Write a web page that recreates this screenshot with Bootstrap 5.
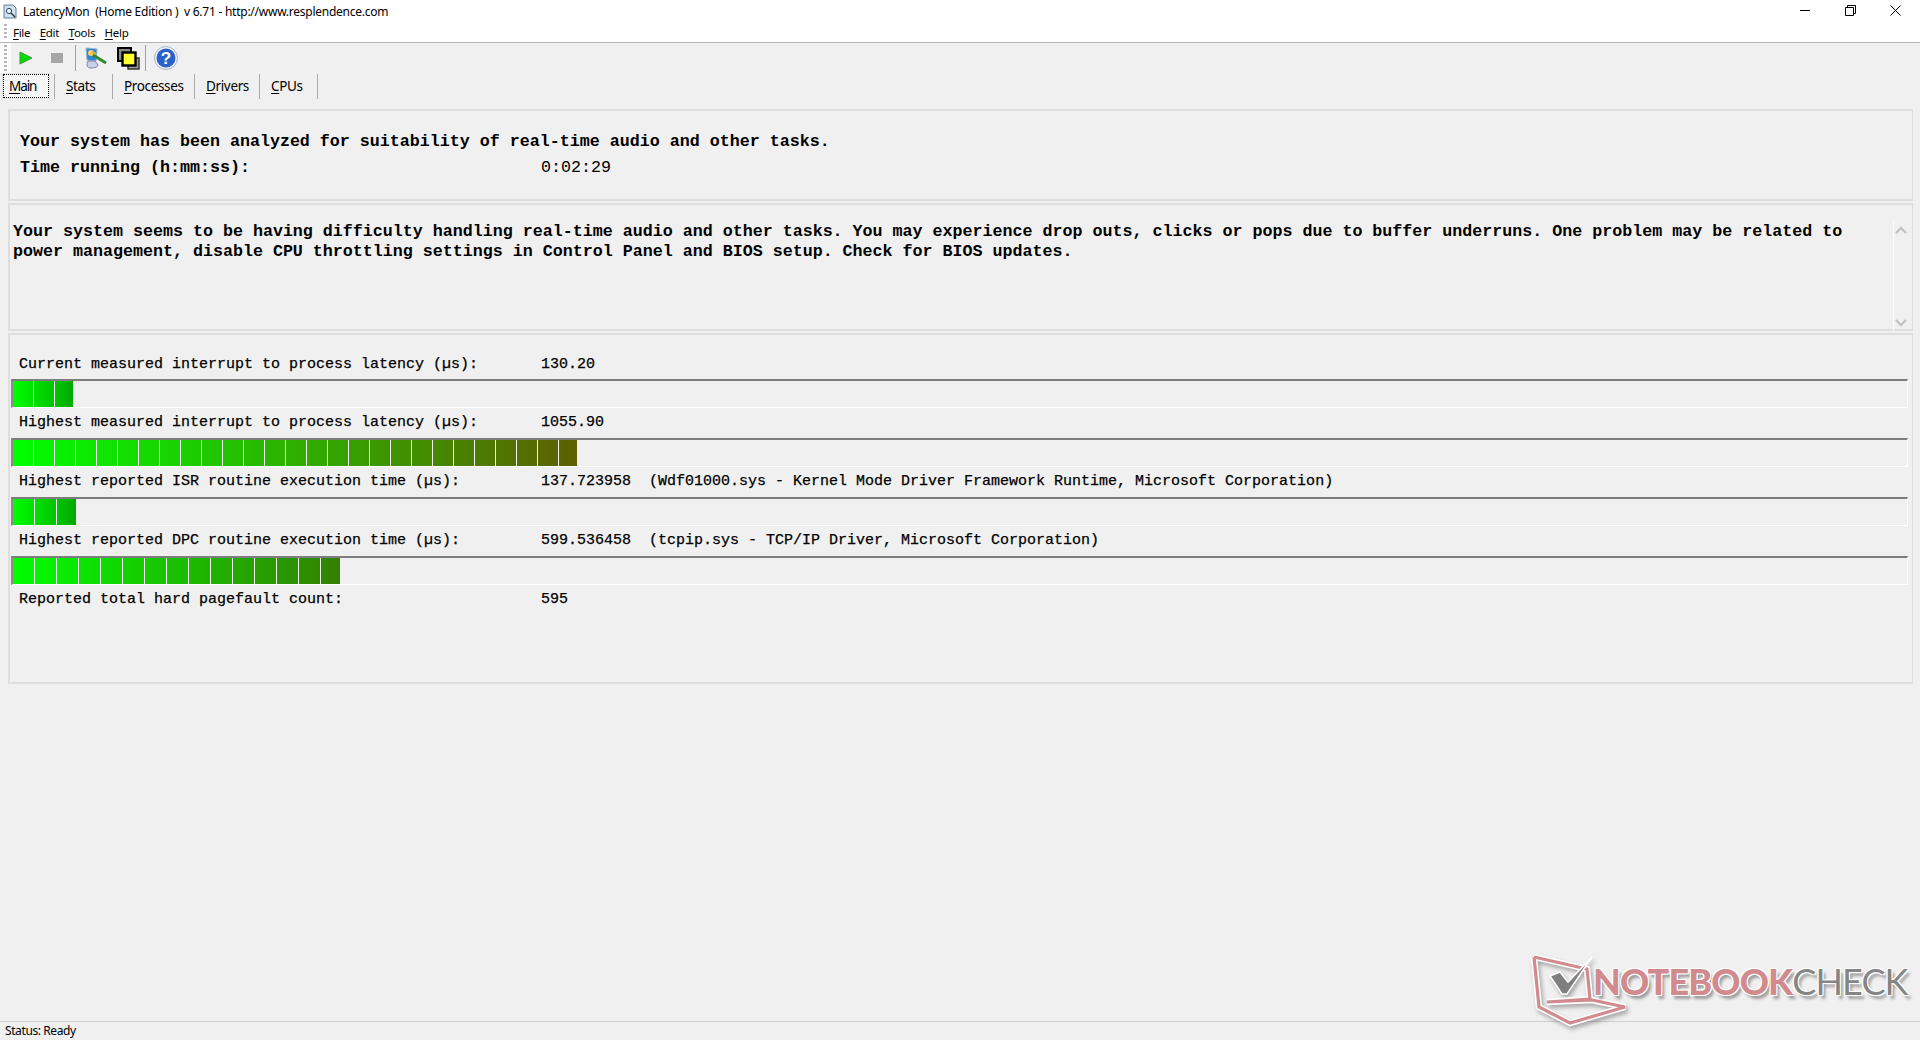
<!DOCTYPE html>
<html lang="en">
<head>
<meta charset="utf-8">
<title>LatencyMon</title>
<link href="https://cdn.jsdelivr.net/npm/bootstrap@5.3.0/dist/css/bootstrap.min.css" rel="stylesheet">
<style>
html,body{height:100%;overflow:hidden;}
body{background:#f0f0f0;color:#000;font-family:"Noto Sans","Open Sans",sans-serif;font-size:12px;}
.app-shell{height:1040px;position:relative;}
.chrome-top{background:#fff;border-bottom:1px solid #b4b4b4;height:43px;flex:none;}
.title-row{height:22px;padding-left:3px;}
.title-text{font-size:12px;margin-left:6px;white-space:pre;letter-spacing:-.25px;line-height:22px;padding-top:1px;}
.win-btns{margin-left:auto;margin-right:2px;height:20px;align-self:flex-start;}
.win-btn{width:45px;height:20px;display:flex;align-items:center;justify-content:center;}
.menu-row{height:20px;position:relative;padding-left:13px;gap:9.5px;}
.menu-item{font-size:11.5px;letter-spacing:-.3px;line-height:20px;padding-top:1px;}
.menu-item u,.tab-item u{text-underline-offset:2px;}
.grip{position:absolute;left:4px;width:3px;background:repeating-linear-gradient(180deg,#b8b8b8 0 2px,transparent 2px 4px);}
.grip-menu{top:2px;height:16px;}
.grip-tool{top:2px;height:26px;}
.tool-row{height:31px;flex:none;position:relative;}
.tool-white{width:11px;background:#fbfbfb;height:30px;flex:none;}
.tool-slot{position:absolute;top:0;height:30px;display:flex;align-items:center;justify-content:center;}
.tool-sep{position:absolute;top:2px;width:1px;height:26px;background:#a0a0a0;}
.tab-row{height:25px;flex:none;position:relative;}
.tab-item{position:absolute;top:0;height:25px;line-height:25px;font-size:13.5px;letter-spacing:-.35px;white-space:nowrap;}
.tab-active{left:3px;width:46px;top:0;height:24px;border:1px dotted #000;background:repeating-conic-gradient(#fff 0 25%,#f0f0f0 0 50%) 0 0/2px 2px;padding-left:5px;line-height:23px;box-shadow:0 0 0 1px #e4e4e4;letter-spacing:-1.1px;}
.tab-sep{position:absolute;top:0;width:1px;height:25px;background:#ababab;}
.panes{padding:10px 7px 0 8px;flex:none;}
.pane{border:2px solid #dedede;border-right-width:1px;border-bottom-width:2px;position:relative;}
.pane-a{height:92px;padding:18px 0 0 10px;font:bold 16.67px/26px "Liberation Mono",monospace;}
.pane-b{height:128px;margin-top:2px;padding:17px 0 0 3px;font:bold 16.67px/20px "Liberation Mono",monospace;}
.pane-c{height:351px;margin-top:2px;padding:14.5px 0 0 1px;font:15px/29.75px "Liberation Mono",monospace;-webkit-text-stroke:.25px #000;}
.mono-line{white-space:pre;}
.lbl-col{display:inline-block;width:521px;}
.lbl-col-b{display:inline-block;width:530px;padding-left:8px;}
.val-thin{font-weight:400;}
.scroll-strip{position:absolute;right:18px;top:16px;bottom:-2px;width:1px;background:#fbfbfb;}
.chev{position:absolute;right:4px;width:14px;}
.chev-up{top:21px;}
.chev-down{bottom:2px;}
.meter{height:29px;margin-right:4px;border-top:2px solid #7d7d7d;border-left:2px solid #8a8a8a;border-bottom:1px solid #fff;border-right:1px solid #fff;width:auto;}
.meter-fill{height:100%;}
.status-row{position:absolute;left:0;right:0;top:1021px;height:19px;border-top:1px solid #d2d2d2;font-size:12px;letter-spacing:-.4px;padding-left:5px;line-height:18px;}
.wm-box{position:absolute;left:1500px;top:940px;width:420px;height:90px;pointer-events:none;}
.wm-art{filter:drop-shadow(2px 3px 2px rgba(0,0,0,.3));}
.wm-text{position:absolute;left:93px;top:19px;font-family:Lato,sans-serif;font-size:36px;line-height:44px;white-space:nowrap;letter-spacing:-.85px;text-shadow:1px 1px 0 #fff,-1px -1px 0 #fff,1px -1px 0 #fff,-1px 1px 0 #fff,3px 4px 3px rgba(0,0,0,.35);}
.wm-red{color:#d18b8e;font-weight:900;}
.wm-gray{color:#858585;font-weight:400;}
</style>
</head>
<body>
<div class="app-shell d-flex flex-column">
  <div class="chrome-top">
    <div class="title-row d-flex align-items-center">
      <svg width="14" height="15" viewBox="0 0 14 15"><path d="M1 1h9l3 3v10H1z" fill="#cfe0ee" stroke="#5f7f9c"/><circle cx="6" cy="7" r="2.6" fill="#fff" stroke="#1c3f78"/><path d="M8 9l4 4" stroke="#333" stroke-width="1.5"/></svg>
      <span class="title-text">LatencyMon  (Home Edition )  v 6.71 - http://www.resplendence.com</span>
      <div class="win-btns d-flex">
        <div class="win-btn"><svg width="11" height="11" viewBox="0 0 11 11"><path d="M0 5.5h10" stroke="#000"/></svg></div>
        <div class="win-btn"><svg width="11" height="11" viewBox="0 0 11 11"><path d="M.5 2.5h8v8h-8zM2.5 2.5v-2h8v8h-2" fill="none" stroke="#000"/></svg></div>
        <div class="win-btn"><svg width="11" height="11" viewBox="0 0 11 11"><path d="M.5.5l10 10M10.5.5l-10 10" stroke="#000"/></svg></div>
      </div>
    </div>
    <div class="menu-row d-flex">
      <div class="grip grip-menu"></div>
      <span class="menu-item"><u>F</u>ile</span>
      <span class="menu-item"><u>E</u>dit</span>
      <span class="menu-item"><u>T</u>ools</span>
      <span class="menu-item"><u>H</u>elp</span>
    </div>
  </div>

  <div class="tool-row">
    <div class="tool-white"></div>
    <div class="grip grip-tool"></div>
    <div class="tool-slot" style="left:19px;width:14px"><svg width="14" height="14" viewBox="0 0 14 14"><path d="M1 1l12 6-12 6z" fill="#00e000" stroke="#3a9a3a"/></svg></div>
    <div class="tool-slot" style="left:51px;width:12px"><svg width="12" height="10" viewBox="0 0 12 10"><rect width="12" height="10" fill="#a6a6a6"/></svg></div>
    <div class="tool-sep" style="left:75px"></div>
    <div class="tool-slot" style="left:84px;width:24px"><svg width="24" height="23" viewBox="0 0 24 23"><path d="M2 1l11 1-1 12-9-1z" fill="#2f86d6" stroke="#8fb0d0"/><path d="M4 14c-2 4-1 7 3 7s7-1 7-3l-3-4z" fill="#c9cfe6" stroke="#7b83a8"/><circle cx="7" cy="6" r="3" fill="#f3d060"/><path d="M9 8l13 8" stroke="#2f8a2f" stroke-width="3"/><path d="M8 5l4 2" stroke="#e8b030" stroke-width="2"/></svg></div>
    <div class="tool-slot" style="left:117px;width:23px"><svg width="23" height="23" viewBox="0 0 23 23"><rect x="1" y="1" width="13" height="13" fill="#8a8a8a" stroke="#000" stroke-width="2"/><rect x="11" y="11" width="11" height="11" fill="#9a9a9a" stroke="#333" stroke-width="1.5"/><rect x="5.5" y="5.5" width="13" height="13" fill="#ffff30" stroke="#000" stroke-width="2.4"/></svg></div>
    <div class="tool-sep" style="left:145px"></div>
    <div class="tool-slot" style="left:154px;width:24px"><svg width="24" height="24" viewBox="0 0 24 24"><circle cx="12" cy="12" r="11.5" fill="#eef2f8" stroke="#a8b4c8"/><circle cx="12" cy="12" r="9.5" fill="#2a62c8"/><text x="12" y="18" text-anchor="middle" font-family="Liberation Sans,sans-serif" font-weight="700" font-size="17" fill="#fff">?</text></svg></div>
  </div>

  <div class="tab-row">
    <span class="tab-item tab-active"><u>M</u>ain</span>
    <div class="tab-sep" style="left:54px"></div>
    <span class="tab-item" style="left:66px"><u>S</u>tats</span>
    <div class="tab-sep" style="left:112px"></div>
    <span class="tab-item" style="left:124px"><u>P</u>rocesses</span>
    <div class="tab-sep" style="left:194px"></div>
    <span class="tab-item" style="left:206px"><u>D</u>rivers</span>
    <div class="tab-sep" style="left:259px"></div>
    <span class="tab-item" style="left:271px"><u>C</u>PUs</span>
    <div class="tab-sep" style="left:317px"></div>
  </div>

  <div class="panes">
    <div class="pane pane-a">
      <div class="mono-line">Your system has been analyzed for suitability of real-time audio and other tasks.</div>
      <div class="mono-line"><span class="lbl-col">Time running (h:mm:ss):</span><span class="val-thin">0:02:29</span></div>
    </div>
    <div class="pane pane-b">
      <div class="mono-line">Your system seems to be having difficulty handling real-time audio and other tasks. You may experience drop outs, clicks or pops due to buffer underruns. One problem may be related to</div>
      <div class="mono-line">power management, disable CPU throttling settings in Control Panel and BIOS setup. Check for BIOS updates.</div>
      <div class="scroll-strip"></div>
      <svg class="chev chev-up" viewBox="0 0 14 8" height="8"><path d="M2 7l5-5 5 5" fill="none" stroke="#c4c4c4" stroke-width="2.4"/></svg>
      <svg class="chev chev-down" viewBox="0 0 14 8" height="8"><path d="M2 1l5 5 5-5" fill="none" stroke="#c4c4c4" stroke-width="2.4"/></svg>
    </div>
    <div class="pane pane-c">
      <div class="mono-line"><span class="lbl-col-b">Current measured interrupt to process latency (µs):</span>130.20</div>
      <div class="meter"><div class="meter-fill" data-n="3" data-w="60" data-end="0,170,0" data-step="21"></div></div>
      <div class="mono-line"><span class="lbl-col-b">Highest measured interrupt to process latency (µs):</span>1055.90</div>
      <div class="meter"><div class="meter-fill" data-n="27" data-w="564" data-end="92,96,0" data-step="21"></div></div>
      <div class="mono-line"><span class="lbl-col-b">Highest reported ISR routine execution time (µs):</span>137.723958  (Wdf01000.sys - Kernel Mode Driver Framework Runtime, Microsoft Corporation)</div>
      <div class="meter"><div class="meter-fill" data-n="3" data-w="63" data-end="0,170,0" data-step="22"></div></div>
      <div class="mono-line"><span class="lbl-col-b">Highest reported DPC routine execution time (µs):</span>599.536458  (tcpip.sys - TCP/IP Driver, Microsoft Corporation)</div>
      <div class="meter"><div class="meter-fill" data-n="15" data-w="327" data-end="52,128,0" data-step="22"></div></div>
      <div class="mono-line"><span class="lbl-col-b">Reported total hard pagefault count:</span>595</div>
    </div>
  </div>

  <div class="status-row">Status: Ready</div>

  <div class="wm-box">
    <svg width="140" height="90" viewBox="0 0 140 90" class="wm-art position-absolute top-0 start-0">
      <g fill="none" stroke-linejoin="miter">
        <path d="M34 17l53 12 3 30-43 3M34 17l5 50 31 16 55-16-33-7-45 2" stroke="#fff" stroke-width="6.4"/>
        <path d="M34 17l53 12 3 30-43 3M34 17l5 50 31 16 55-16-33-7-45 2" stroke="#d18b8e" stroke-width="3.2"/>
      </g>
      <path d="M50 36l10-4 8 10 24-25-25 37h-5z" fill="#7f7f7f" stroke="#fff" stroke-width="1.5"/>
    </svg>
    <div class="wm-text"><span class="wm-red">NOTEBOOK</span><span class="wm-gray">CHECK</span></div>
  </div>
</div>
<script src="https://cdn.jsdelivr.net/npm/bootstrap@5.3.0/dist/js/bootstrap.bundle.min.js"></script>
<script>
document.querySelectorAll('.meter-fill').forEach(function(el){
  var n=+el.dataset.n,w=+el.dataset.w,st=+el.dataset.step,e=el.dataset.end.split(',').map(Number);
  var s=[];
  function col(t){return 'rgb('+Math.round(e[0]*t)+','+Math.round(255+(e[1]-255)*t)+','+Math.round(e[2]*t)+')';}
  for(var i=0;i<n;i++){
    var a=i*st,b=Math.min(a+st,w);
    s.push(col(a/w)+' '+a+'px',col(b/w)+' '+(b-1)+'px');
    if(i<n-1){s.push('#f4f4f4 '+(b-1)+'px','#f4f4f4 '+b+'px');}
  }
  el.style.width=w+'px';
  el.style.background='linear-gradient(90deg,'+s.join(',')+')';
});
</script>
</body>
</html>
